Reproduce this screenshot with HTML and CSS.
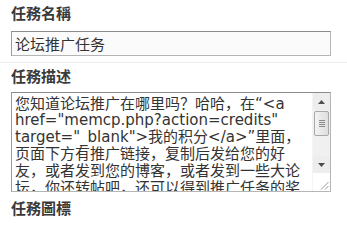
FILE: index.html
```html
<!DOCTYPE html>
<html lang="zh">
<head>
<meta charset="utf-8">
<title>任務</title>
<link rel="stylesheet" href="styles.css">
</head>
<body>
<div class="form">
  <section class="group first">
    <h3 class="label">任務名稱</h3>
    <input class="text-input" type="text" value="论坛推广任务">
  </section>
  <section class="group">
    <h3 class="label">任務描述</h3>
    <div class="textarea">
      <div class="ta-text">您知道论坛推广在哪里吗<span class="fw">？</span>哈哈<span class="fw">，</span>在“&lt;a href="memcp.php?action=credits" target="_blank"&gt;我的积分&lt;/a&gt;”里面<span class="fw">，</span>页面下方有推广链接<span class="fw">，</span>复制后发给您的好友<span class="fw">，</span>或者发到您的博客<span class="fw">，</span>或者发到一些大论坛<span class="fw">，</span>你还转帖吧<span class="fw">，</span>还可以得到推广任务的奖励哦<span class="fw">！</span></div>
      <div class="scrollbar">
        <div class="sb-btn">
          <svg width="7" height="4" viewBox="0 0 7 4"><path d="M0 4 L3.5 0 L7 4 Z" fill="#4d4d4d"/></svg>
        </div>
        <div class="sb-thumb">
          <span class="grip"></span><span class="grip"></span><span class="grip"></span><span class="grip"></span>
        </div>
        <div class="sb-track"></div>
        <div class="sb-btn">
          <svg width="7" height="4" viewBox="0 0 7 4"><path d="M0 0 L3.5 4 L7 0 Z" fill="#4d4d4d"/></svg>
        </div>
        <div class="sb-corner">
          <svg width="9" height="9" viewBox="0 0 9 9"><path d="M8.5 1 L1 8.5 M8.5 5 L5 8.5" stroke="#9a9a9a" stroke-width="1" fill="none"/></svg>
        </div>
      </div>
    </div>
  </section>
  <section class="group last">
    <h3 class="label">任務圖標</h3>
  </section>
</div>
</body>
</html>
```

FILE: styles.css
```css
html, body {
  margin: 0;
  padding: 0;
  background: #ffffff;
}

body {
  font-family: "DejaVu Sans", "Noto Sans CJK SC", sans-serif;
  color: #333333;
  overflow: hidden;
}

.form {
  width: 347px;
}

.group {
  padding: 4px 16px 0 11px;
}

.group.first {
  padding-bottom: 6px;
  border-bottom: 1px solid #ececec;
}

.group.last {
  padding-top: 7px;
}

.label {
  margin: 0;
  font-family: "Noto Sans CJK SC", sans-serif;
  font-size: 15px;
  line-height: 18px;
  font-weight: bold;
  color: #3a3a3a;
}

.text-input {
  display: block;
  box-sizing: border-box;
  width: 320px;
  height: 25px;
  margin: 9px 0 0 0;
  padding: 0 3px;
  border: 1px solid #b5b5b5;
  border-top-color: #8c8c8c;
  border-left-color: #9a9a9a;
  background: #fbfbfb;
  font-family: "Noto Sans CJK SC", sans-serif;
  font-size: 15px;
  color: #333333;
  outline: none;
}

.textarea {
  display: flex;
  box-sizing: border-box;
  width: 320px;
  height: 100px;
  margin-top: 7px;
  border: 1px solid #b5b5b5;
  border-top-color: #8c8c8c;
  border-left-color: #9a9a9a;
  background: #ffffff;
  overflow: hidden;
}

.ta-text {
  flex: 1;
  padding: 2px 4px 0 3px;
  font-family: "DejaVu Sans", "Noto Sans CJK SC", sans-serif;
  font-size: 15px;
  line-height: 16px;
  color: #333333;
  word-break: normal;
  overflow-wrap: break-word;
  line-break: strict;
}

.fw {
  font-family: "Noto Sans CJK SC", sans-serif;
}

.scrollbar {
  width: 17px;
  display: flex;
  flex-direction: column;
  background: #f0f0f0;
  border-left: 1px solid #f4f4f4;
}

.sb-btn {
  height: 17px;
  display: flex;
  align-items: center;
  justify-content: center;
  background: #ededed;
}

.sb-thumb {
  height: 25px;
  margin: 1px 1px 0 1px;
  box-sizing: border-box;
  border: 1px solid #a8a8a8;
  border-radius: 2px;
  background: linear-gradient(to right, #f3f3f3, #dedede);
  display: flex;
  flex-direction: column;
  align-items: center;
  justify-content: center;
  gap: 1px;
}

.grip {
  display: block;
  width: 6px;
  height: 1px;
  background: #8a8a8a;
}

.sb-track {
  flex: 1;
}

.sb-corner {
  height: 17px;
  background: #ffffff;
  display: flex;
  align-items: flex-end;
  justify-content: flex-end;
  padding: 0 1px 1px 0;
}
```
